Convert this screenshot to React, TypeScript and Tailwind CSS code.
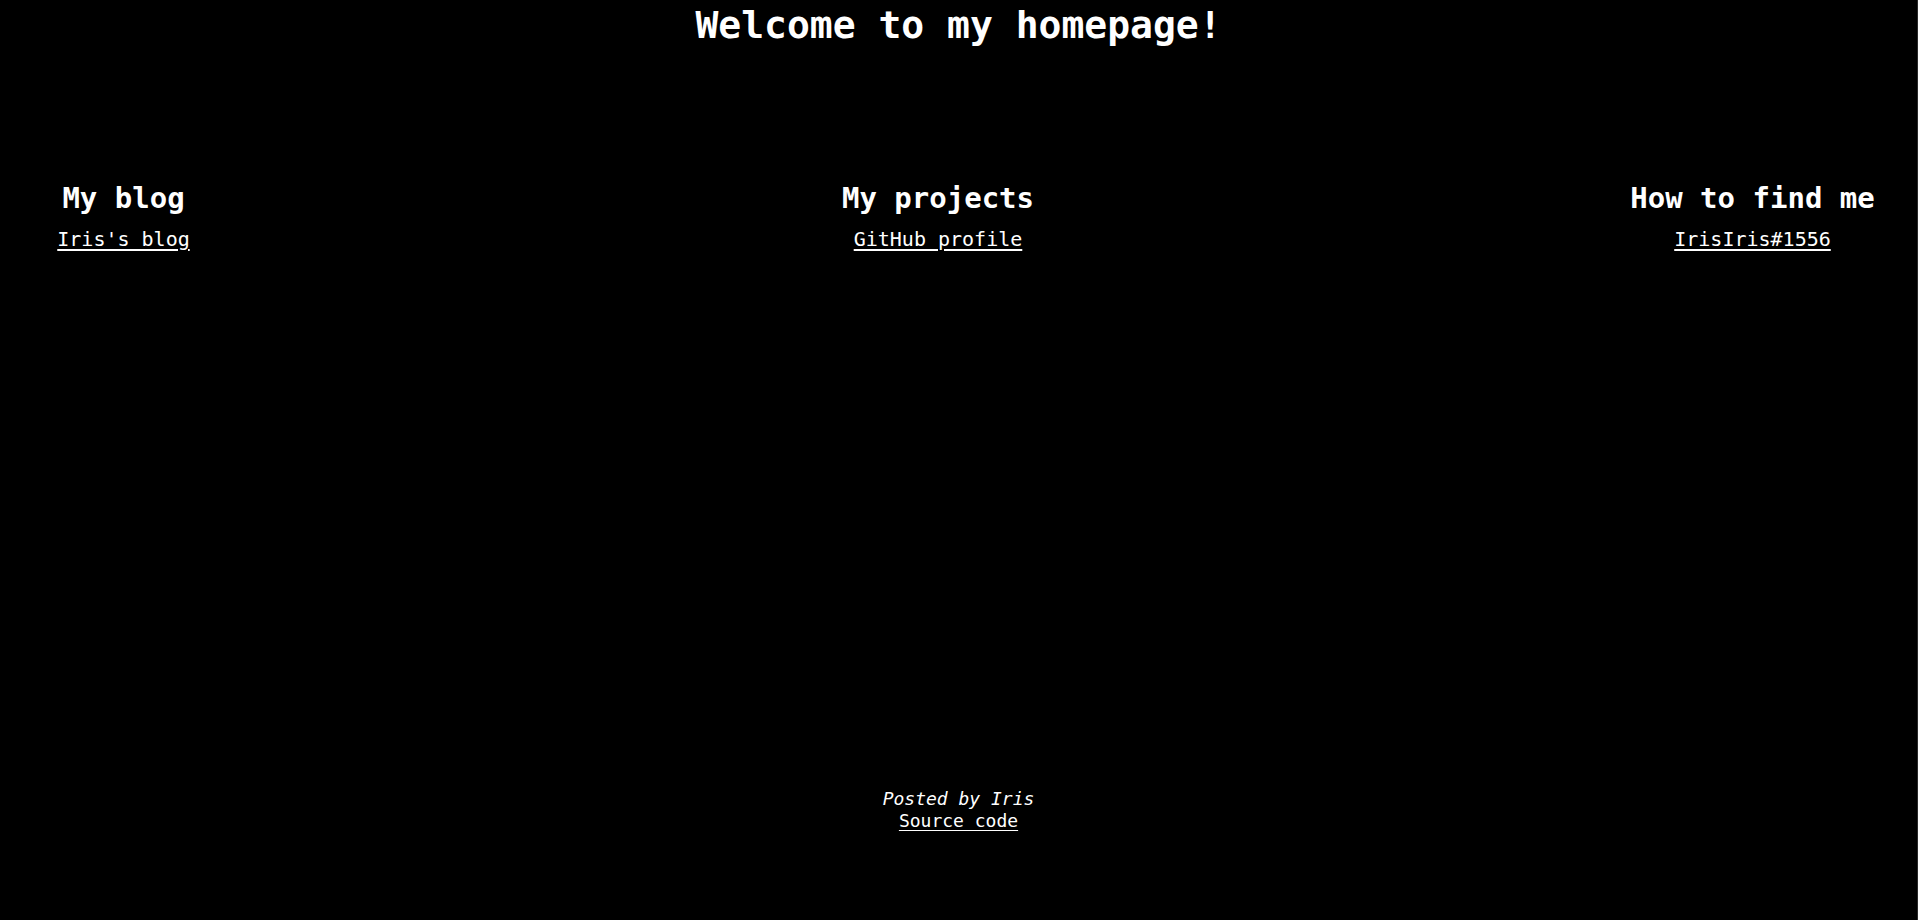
import React from "react";

export default function App() {
  const mono = { fontFamily: '"DejaVu Sans Mono", "Liberation Mono", monospace' };
  return (
    <div
      className="w-full h-[920px] bg-black text-white border-r border-[#2a2a2a] flex flex-col"
      style={mono}
    >
      <div className="pt-[2px] text-center">
        <h1 className="text-[38px] leading-[46px] font-bold">Welcome to my homepage!</h1>
      </div>
      <div className="mt-[133px] flex justify-between pl-0 pr-[41px]">
        {[
          ["My blog", "Iris's blog"],
          ["My projects", "GitHub profile"],
          ["How to find me", "IrisIris#1556"],
        ].map(([h, l]) => (
          <div key={h} className="w-[247px] flex flex-col items-center text-center">
            <h2 className="text-[29px] leading-[34px] font-bold">{h}</h2>
            <a href="#" className="mt-[12px] text-[20px] leading-[24px] underline underline-offset-[3px]">
              {l}
            </a>
          </div>
        ))}
      </div>
      <div className="mt-[537px] flex flex-col items-center text-[18px] leading-[22px]">
        <p className="italic">Posted by Iris</p>
        <a href="#" className="underline underline-offset-[3px]">Source code</a>
      </div>
    </div>
  );
}
